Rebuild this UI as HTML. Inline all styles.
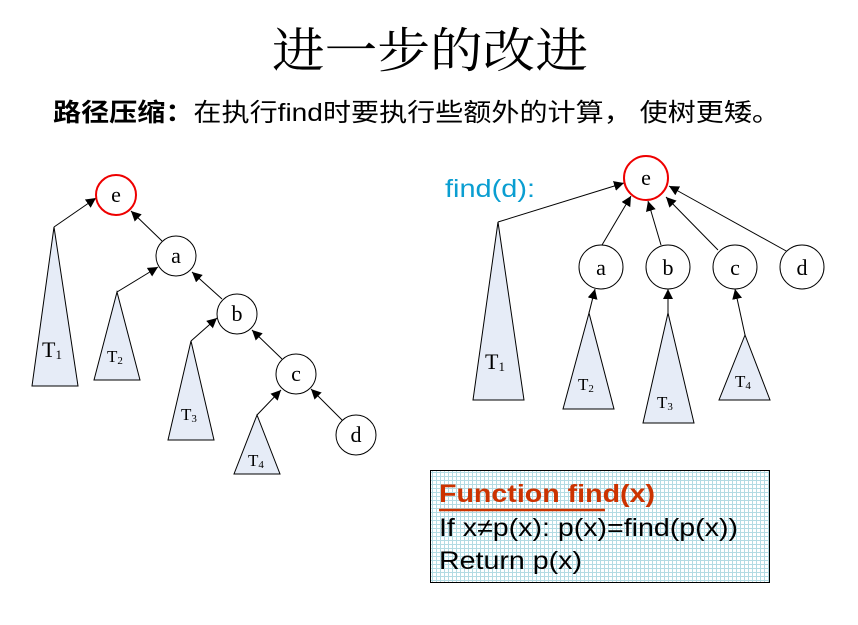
<!DOCTYPE html>
<html><head><meta charset="utf-8"><style>
html,body{margin:0;padding:0;background:#fff;}
svg{display:block;}
</style></head><body>
<svg width="858" height="625" viewBox="0 0 858 625" xmlns="http://www.w3.org/2000/svg">
<defs>
<marker id="ar" viewBox="0 0 10 10" refX="10" refY="5" markerWidth="10" markerHeight="10" markerUnits="userSpaceOnUse" orient="auto">
<path d="M0,0 L10,5 L0,10 z" fill="#000"/></marker>
<pattern id="grid" width="4" height="4" patternUnits="userSpaceOnUse">
<rect width="4" height="4" fill="#fff"/>
<path d="M0,0.5H4M0.5,0V4" stroke="#b3dbe3" stroke-width="1"/>
</pattern>
</defs>
<text x="430" y="67" text-anchor="middle" font-family="'Noto Serif CJK SC','Liberation Serif',serif" font-size="48" textLength="316" lengthAdjust="spacingAndGlyphs">进一步的改进</text>
<text x="53" y="121" font-family="'Liberation Sans','Noto Sans CJK SC',sans-serif" font-size="25" textLength="727" lengthAdjust="spacingAndGlyphs"><tspan font-weight="bold">路径压缩：</tspan>在执行find时要执行些额外的计算， 使树更矮。</text>

<g stroke="#000" stroke-width="1" fill="#e6ecf7">
<polygon points="54,227 32,386 78,386"/>
<polygon points="117,292 94,380 140,380"/>
<polygon points="191,341 168,440 214,440"/>
<polygon points="257,415 234,474 280,474"/>
<polygon points="498,222 473,400 524,400"/>
<polygon points="589,313 563,409 614,409"/>
<polygon points="668,313 643,423 694,423"/>
<polygon points="745,335 719,400 770,400"/>
</g>
<g stroke="#000" stroke-width="1" fill="none" marker-end="url(#ar)">
<line x1="54" y1="227" x2="96" y2="198"/>
<line x1="117" y1="292" x2="158" y2="267"/>
<line x1="191" y1="341" x2="217" y2="318"/>
<line x1="257" y1="415" x2="281" y2="390"/>
<line x1="162" y1="241" x2="131" y2="211"/>
<line x1="222" y1="299" x2="192" y2="272"/>
<line x1="282" y1="359" x2="252" y2="330"/>
<line x1="343" y1="421" x2="311" y2="389"/>
<line x1="498" y1="222" x2="624" y2="183"/>
<line x1="602" y1="245" x2="631" y2="196"/>
<line x1="661" y1="245" x2="648" y2="201"/>
<line x1="718" y1="250" x2="666" y2="197"/>
<line x1="788" y1="252" x2="669" y2="186"/>
<line x1="589" y1="313" x2="595" y2="289"/>
<line x1="668" y1="313" x2="668" y2="289"/>
<line x1="745" y1="335" x2="735" y2="289"/>
</g>
<g fill="#fff" stroke="#000" stroke-width="1">
<circle cx="176" cy="256" r="20"/><circle cx="237" cy="314" r="20"/>
<circle cx="296" cy="374" r="20"/><circle cx="356" cy="435" r="20"/>
<circle cx="601" cy="267" r="22"/><circle cx="668" cy="267" r="22"/>
<circle cx="735" cy="267" r="22"/><circle cx="802" cy="267" r="22"/>
</g>
<circle cx="116" cy="195" r="20" fill="#fff" stroke="#e00" stroke-width="2"/>
<circle cx="646" cy="178" r="22" fill="#fff" stroke="#e00" stroke-width="2"/>
<g font-family="'Liberation Serif',serif" font-size="22" text-anchor="middle">
<text x="116" y="202">e</text><text x="176" y="263">a</text><text x="237" y="321">b</text>
<text x="296" y="381">c</text><text x="356" y="442">d</text>
<text x="646" y="185">e</text><text x="601" y="275">a</text><text x="668" y="275">b</text>
<text x="735" y="275">c</text><text x="802" y="275">d</text>
</g>
<g font-family="'Liberation Serif',serif">
<text x="42" y="357" font-size="22">T<tspan font-size="13" dy="2">1</tspan></text>
<text x="107" y="362" font-size="17">T<tspan font-size="11" dy="2">2</tspan></text>
<text x="181" y="420" font-size="17">T<tspan font-size="11" dy="2">3</tspan></text>
<text x="248" y="466" font-size="17">T<tspan font-size="11" dy="2">4</tspan></text>
<text x="485" y="369" font-size="22">T<tspan font-size="13" dy="2">1</tspan></text>
<text x="578" y="390" font-size="17">T<tspan font-size="11" dy="2">2</tspan></text>
<text x="657" y="408" font-size="17">T<tspan font-size="11" dy="2">3</tspan></text>
<text x="735" y="387" font-size="17">T<tspan font-size="11" dy="2">4</tspan></text>
</g>
<text x="445" y="197" font-family="'Liberation Sans',sans-serif" font-size="25" fill="#0a9ed1" textLength="90" lengthAdjust="spacingAndGlyphs">find(d):</text>

<rect x="430.5" y="470.5" width="339" height="112" fill="url(#grid)" stroke="#000" stroke-width="1"/>
<text x="439" y="502" font-family="'Liberation Sans',sans-serif" font-size="25" font-weight="bold" fill="#cc3300" textLength="216" lengthAdjust="spacingAndGlyphs">Function find(x)</text>
<line x1="439" y1="510" x2="605" y2="510" stroke="#cc3300" stroke-width="2.5"/>
<text x="439" y="536" font-family="'Liberation Sans',sans-serif" font-size="25" textLength="299" lengthAdjust="spacingAndGlyphs">If x≠p(x): p(x)=find(p(x))</text>
<text x="439" y="569" font-family="'Liberation Sans',sans-serif" font-size="25" textLength="143" lengthAdjust="spacingAndGlyphs">Return p(x)</text>
</svg>
</body></html>
